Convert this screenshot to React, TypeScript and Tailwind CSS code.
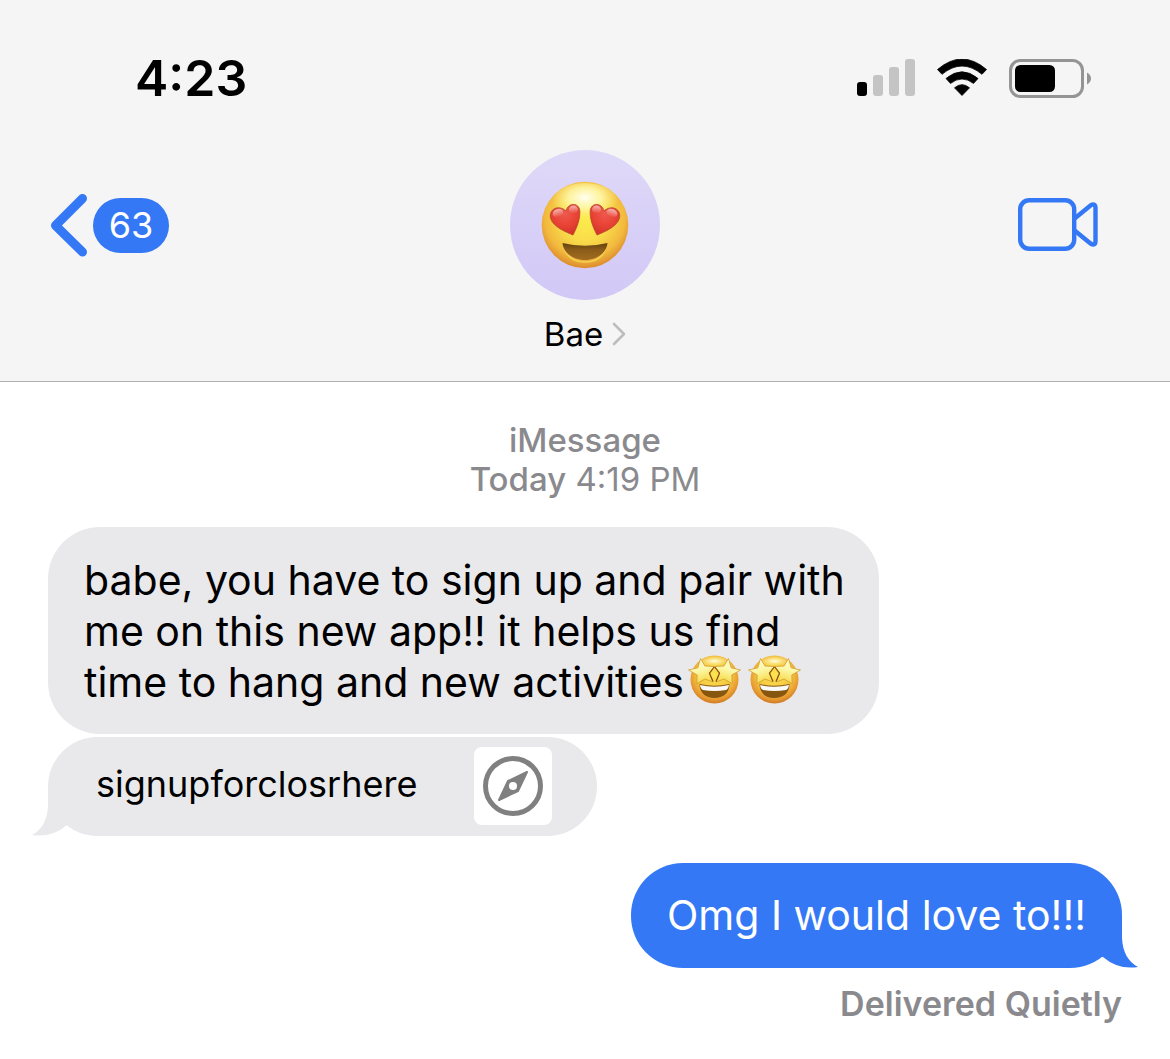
import React from "react";

function SignalIcon() {
  return (
    <svg width="58" height="38" viewBox="0 0 58 38" aria-label="Signal strength">
      <rect x="0" y="23" width="10" height="14" rx="3" fill="#000" />
      <rect x="16" y="16" width="10" height="21" rx="3" fill="#c4c4c4" />
      <rect x="32" y="8" width="10" height="29" rx="3" fill="#c4c4c4" />
      <rect x="48" y="0" width="10" height="37" rx="3" fill="#c4c4c4" />
    </svg>
  );
}

function WifiIcon() {
  return (
    <svg width="50" height="38" viewBox="0 0 50 38" aria-label="Wi-Fi">
      <path d="M0.5 10.5 Q25 -10.5 49.5 10.5 L45 15.3 Q25 -1.2 5 15.3 Z" fill="#000" stroke="#000" strokeWidth="0.8" strokeLinejoin="round" />
      <path d="M9 19.5 Q25 6 41 19.5 L36.5 24.4 Q25 15.6 13.5 24.4 Z" fill="#000" stroke="#000" strokeWidth="0.8" strokeLinejoin="round" />
      <path d="M17.5 28.8 Q25 22.5 32.5 28.8 L25 36.5 Z" fill="#000" stroke="#000" strokeWidth="0.8" strokeLinejoin="round" />
    </svg>
  );
}

function BatteryIcon() {
  return (
    <svg width="82" height="39" viewBox="0 0 82 39" aria-label="Battery">
      <rect x="1.5" y="1.5" width="72" height="36" rx="10" fill="none" stroke="#949494" strokeWidth="3" />
      <rect x="6" y="6" width="40" height="27" rx="5.5" fill="#000" />
      <path d="M78 13.5 Q82 16 82 19.5 Q82 23 78 25.5 Z" fill="#949494" />
    </svg>
  );
}

const EYE = "M32 54 C25 51 12 46 9.500 37 C7.500 28.500 17 23 25 30 C27 21.500 38 21 38.800 30 C39.300 39 35 48 32 54 Z";

function HeartEyes() {
  return (
    <svg width="88" height="88" viewBox="0 0 88 88" role="img" aria-label="Smiling face with heart eyes">
      <defs>
        <radialGradient id="heFace" cx="0.5" cy="0.42" r="0.59">
          <stop offset="0" stopColor="#fcec4d" />
          <stop offset="0.45" stopColor="#f9dc4a" />
          <stop offset="0.78" stopColor="#f2b93e" />
          <stop offset="1" stopColor="#da862b" />
        </radialGradient>
        <radialGradient id="heShine" cx="0.5" cy="0.35" r="0.5">
          <stop offset="0" stopColor="#fffff2" />
          <stop offset="0.5" stopColor="#fff9b0" stopOpacity="0.8" />
          <stop offset="1" stopColor="#fdf28a" stopOpacity="0" />
        </radialGradient>
        <radialGradient id="heHeart" cx="0.5" cy="0.3" r="0.7">
          <stop offset="0" stopColor="#ee5a4f" />
          <stop offset="0.5" stopColor="#ea4537" />
          <stop offset="1" stopColor="#d4332a" />
        </radialGradient>
        <linearGradient id="heGloss" x1="0" y1="0" x2="0" y2="1">
          <stop offset="0" stopColor="#fff" stopOpacity="0.6" />
          <stop offset="1" stopColor="#fff" stopOpacity="0" />
        </linearGradient>
        <linearGradient id="heMouth" x1="0" y1="0" x2="0" y2="1">
          <stop offset="0" stopColor="#63400f" />
          <stop offset="0.4" stopColor="#8b5c19" />
          <stop offset="1" stopColor="#a16c20" />
        </linearGradient>
        <g id="heEye">
          <path d={EYE} fill="url(#heHeart)" stroke="#bb4a2c" strokeWidth="0.9" />
          <ellipse cx="17" cy="32" rx="5.5" ry="4" transform="rotate(-20 17 32)" fill="url(#heGloss)" />
          <ellipse cx="32.5" cy="28.500" rx="4.500" ry="4" fill="url(#heGloss)" />
        </g>
      </defs>
      <circle cx="44" cy="44" r="43.3" fill="url(#heFace)" />
      <ellipse cx="44" cy="23" rx="34" ry="21" fill="url(#heShine)" />
      <path d="M23 66 C26 77 34 81 44 81 C54 81 62 77 65 66" fill="none" stroke="#fae05a" strokeWidth="1.5" opacity="0.7" />
      <path d="M21.500 62 Q44 67.500 66.500 62 C65.500 72 56 79 44 79 C32 79 22.500 72 21.500 62 Z" fill="url(#heMouth)" />
      <use href="#heEye" />
      <use href="#heEye" transform="translate(88 0) scale(-1 1)" />
    </svg>
  );
}

const STAR = "M12.5 3.500 L17 11 L26.500 11.500 L21.500 18.200 L25 27 L16.800 24 L8.800 28.800 L9.200 20 L0.500 15 L9.800 12.800 Z";

function StarStruck({ id }: { id: string }) {
  return (
    <svg className="-mt-3 inline-block align-[-8px]" width="60" height="50" viewBox="-4 0 60 50" role="img" aria-label="Star-struck face">
      <defs>
        <radialGradient id={id + "f"} cx="0.5" cy="0.4" r="0.6">
          <stop offset="0" stopColor="#fbe64e" />
          <stop offset="0.6" stopColor="#f4c441" />
          <stop offset="0.85" stopColor="#e79a31" />
          <stop offset="1" stopColor="#d07a24" />
        </radialGradient>
        <linearGradient id={id + "s"} x1="0" y1="0" x2="0.3" y2="1">
          <stop offset="0" stopColor="#fffce0" />
          <stop offset="0.55" stopColor="#fcf7a6" />
          <stop offset="1" stopColor="#f7dc4c" />
        </linearGradient>
        <radialGradient id={id + "h"}>
          <stop offset="0" stopColor="#fffee0" />
          <stop offset="1" stopColor="#fff59c" stopOpacity="0" />
        </radialGradient>
        <path id={id + "star"} d={STAR} fill={"url(#" + id + "s)"} stroke="#d19a35" strokeWidth="0.8" strokeLinejoin="round" />
      </defs>
      <circle cx="26.5" cy="24.5" r="24" fill={"url(#" + id + "f)"} />
      <ellipse cx="26.5" cy="6" rx="15" ry="5" fill={"url(#" + id + "h)"} />
      <path d="M11.5 29 Q26.5 32.500 41.5 29 C41.500 38 35 43 26.500 43 C18 43 11.500 38 11.500 29 Z" fill="#87560f" />
      <path d="M12 30 Q26.5 33.5 41 30 Q40.5 34 38 35 Q26.5 37 15 35 Q12.5 34 12 30 Z" fill="#fafafa" />
      <use href={"#" + id + "star"} />
      <use href={"#" + id + "star"} transform="translate(53 0) scale(-1 1)" />
      <path d="M26.200 12 L21.500 18.200 L25 26.500 M26.800 12 L31.500 18.200 L28 26.500" fill="none" stroke="#8a4f16" strokeWidth="1.2" strokeLinejoin="round" />
    </svg>
  );
}

function CompassIcon() {
  return (
    <svg width="60" height="60" viewBox="0 0 60 60" aria-hidden="true">
      <circle cx="30" cy="30" r="27.5" fill="none" stroke="#808080" strokeWidth="5" />
      <path fill="#808080" stroke="#808080" strokeWidth="2" strokeLinejoin="round" d="M44 16 L25 25 L16 44 L35 35 Z" />
      <circle cx="30" cy="30" r="4" fill="#fff" />
    </svg>
  );
}

export default function App() {
  return (
    <div className="min-h-screen bg-white font-['Inter','Liberation_Sans',sans-serif] text-black">
      <header className="border-b border-[#b0b0b2] bg-[#f5f5f5] pb-[27px]">
        <div className="flex items-center justify-between pt-12 pr-[79px] pl-[135px]">
          <time className="text-[50px] leading-[60px] font-semibold">4:23</time>
          <div className="flex items-center gap-[22px]">
            <SignalIcon />
            <WifiIcon />
            <BatteryIcon />
          </div>
        </div>
        <nav className="mt-[42px] grid grid-cols-3 items-start pr-[72px] pl-[50px]">
          <button type="button" aria-label="Back, 63 unread" className="mt-[43px] flex items-center gap-[5px] justify-self-start">
            <svg width="38" height="64" viewBox="0 0 38 64" aria-hidden="true">
              <path d="M32.5 5.500 L5.5 32.500 L32.5 59" fill="none" stroke="#3478f6" strokeWidth="9" strokeLinecap="round" strokeLinejoin="round" />
            </svg>
            <span className="flex h-[55px] w-[76px] items-center justify-center rounded-full bg-[#3478f6] text-[36px] text-white">63</span>
          </button>
          <button type="button" className="ml-[22px] flex flex-col items-center justify-self-center">
            <span className="flex size-[150px] items-center justify-center rounded-full bg-linear-to-b from-[#dfd9f8] to-[#d1c8f6]">
              <HeartEyes />
            </span>
            <span className="mt-[14px] flex items-center gap-2 text-[33px] leading-[40px]">
              Bae
              <svg width="15" height="24" viewBox="0 0 15 24" aria-hidden="true">
                <path d="M3 2 L13 12 L3 22" fill="none" stroke="#bdbdbf" strokeWidth="2.6" strokeLinecap="round" strokeLinejoin="round" />
              </svg>
            </span>
          </button>
          <button type="button" aria-label="Video call" className="mt-12 justify-self-end">
            <svg width="80" height="54" viewBox="0 0 80 54" fill="none" stroke="#3478f6" strokeWidth="4.4" strokeLinejoin="round" aria-hidden="true">
              <rect x="2.200" y="2.200" width="54" height="48.600" rx="9" />
              <path d="M56 21 L72.500 7.500 Q77.500 4.500 77.500 10 V43 Q77.500 48.500 72.500 45.500 L56 32" />
            </svg>
          </button>
        </nav>
      </header>
      <main className="flex flex-col pt-[39px] pr-12 pl-12">
        <div className="text-center text-[33px] leading-[39px] text-[#8a8a8e]">
          <p className="font-medium">iMessage</p>
          <p><span className="font-medium">Today</span> 4:19 PM</p>
        </div>
        <div className="mt-7 self-start rounded-[52px] bg-[#e9e9eb] pt-7 pr-[34px] pb-[26px] pl-9 text-[41px] leading-[51px]">
          <p>
            babe, you have to sign up and pair with<br />
            me on this new app!! it helps us find<br />
            time to hang and new activities<StarStruck id="a" /><StarStruck id="b" />
          </p>
        </div>
        <div className="relative mt-[3px] self-start">
          <svg className="absolute bottom-0 -left-4" width="60" height="52" viewBox="0 0 60 52" aria-hidden="true">
            <path d="M16 0 V22 Q15 43 0 51 Q20 54 35 41 L60 30 V0 Z" fill="#e9e9eb" />
          </svg>
          <a href="#signup" className="relative flex items-center gap-[57px] rounded-[50px] bg-[#e9e9eb] pt-[10px] pr-[45px] pb-[11px] pl-12 text-[36px]">
            <span className="pb-1">signupforclosrhere</span>
            <span className="flex size-[78px] items-center justify-center rounded-lg bg-white">
              <CompassIcon />
            </span>
          </a>
        </div>
        <div className="relative mt-[27px] self-end">
          <svg className="absolute -right-4 bottom-0" width="60" height="52" viewBox="0 0 60 52" aria-hidden="true">
            <path d="M44 0 V22 Q45 43 60 51 Q40 54 25 41 L0 30 V0 Z" fill="#3478f6" />
          </svg>
          <p className="relative rounded-[52px] bg-[#3478f6] px-9 py-[27px] text-[41px] leading-[51px] text-white">Omg I would love to!!!</p>
        </div>
        <p className="mt-4 self-end text-[34px] leading-[39px] font-semibold text-[#8a8a8e]">Delivered Quietly</p>
      </main>
    </div>
  );
}
